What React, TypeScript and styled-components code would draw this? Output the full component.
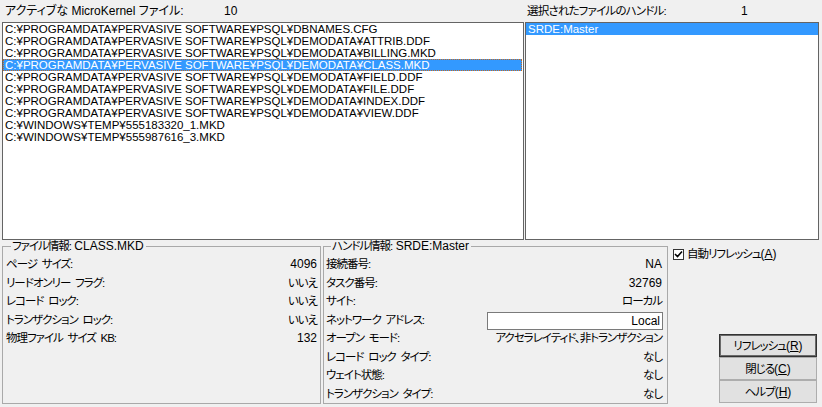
import React from "react";
import styled, { createGlobalStyle } from "styled-components";

const GlobalStyle = createGlobalStyle`
  html, body { margin: 0; padding: 0; background: #f0f0f0; }
  * { box-sizing: border-box; }
`;

const FONT = `"Liberation Sans Narrow", "Liberation Sans", "Noto Sans CJK JP", sans-serif`;

const Window = styled.div`
  width: 822px;
  height: 407px;
  background: #f0f0f0;
  color: #000;
  font-family: ${FONT};
  font-size: 12px;
  font-feature-settings: "palt";
  display: grid;
  grid-template-rows: 22px 218px 1fr;
  padding-left: 2px;
  overflow: hidden;
`;

const Jp = styled.span<{ $tight?: number }>`
  font-size: 11.5px;
  letter-spacing: ${(p) => (p.$tight ?? -1)}px;
  word-spacing: 2.5px;
`;

const Header = styled.div`
  display: grid;
  grid-template-columns: 522px 1fr;
  align-items: center;
`;

const HeaderCell = styled.div<{ $labelWidth: number }>`
  display: flex;
  align-items: center;
  padding-left: 3px;
  line-height: 12px;
  & > span:first-child {
    width: ${(p) => p.$labelWidth}px;
    white-space: nowrap;
  }
`;

const Lists = styled.div`
  display: flex;
  gap: 1px;
`;

const ListBox = styled.div<{ $width: number }>`
  width: ${(p) => p.$width}px;
  height: 218px;
  background: #fff;
  border: 1px solid #646464;
  display: flex;
  flex-direction: column;
  overflow: hidden;
`;

const ListItem = styled.div<{ $selected?: boolean; $focused?: boolean }>`
  height: 12px;
  line-height: 12px;
  font-size: 11.5px;
  padding-left: 2px;
  white-space: nowrap;
  background: ${(p) => (p.$selected ? "#3399ff" : "transparent")};
  color: ${(p) => (p.$selected ? "#fff" : "#000")};
  outline: ${(p) => (p.$focused ? "1px dotted #c86a1e" : "none")};
  outline-offset: -1px;
  margin-right: ${(p) => (p.$focused ? "1px" : "0")};
`;

const Bottom = styled.div`
  display: grid;
  grid-template-columns: 319px 345px 1fr;
  column-gap: 2px;
  padding-bottom: 3px;
`;

const Group = styled.fieldset<{ $pl: number; $pr: number }>`
  margin: 0;
  border: 1px solid #a9a9a9;
  padding: 3px ${(p) => p.$pr}px 0 ${(p) => p.$pl}px;
  min-width: 0;
  display: block;
`;

const GroupTitle = styled.legend`
  padding: 0 2px 0 1px;
  margin-left: 5px;
  line-height: 12px;
  font-size: 12px;
  white-space: nowrap;
`;

const Rows = styled.div`
  display: grid;
  grid-auto-rows: 18.5px;
`;

const Row = styled.div`
  display: flex;
  align-items: center;
  justify-content: space-between;
  white-space: nowrap;
  line-height: 12px;
`;

const Field = styled.div`
  width: 176px;
  height: 18px;
  margin-top: 3px;
  margin-right: -1px;
  background: #fff;
  border: 1px solid #7a7a7a;
  text-align: right;
  padding-right: 2px;
  line-height: 16px;
`;

const Side = styled.div`
  display: flex;
  flex-direction: column;
  padding: 8px 5px 1px 3px;
`;

const CheckRow = styled.label`
  display: flex;
  align-items: center;
  gap: 3px;
  line-height: 12px;
  white-space: nowrap;
`;

const CheckBox = styled.span`
  width: 11px;
  height: 11px;
  border: 1px solid #333;
  background: #fff;
  display: inline-flex;
  align-items: center;
  justify-content: center;
`;

const Buttons = styled.div`
  margin-top: auto;
  align-self: flex-end;
  display: flex;
  flex-direction: column;
`;

const Button = styled.button<{ $default?: boolean }>`
  width: 98px;
  height: 23px;
  margin: 0;
  padding: 0;
  font-family: ${FONT};
  font-size: 12px;
  font-feature-settings: "palt";
  color: #000;
  background: #e1e1e1;
  border: 1px solid ${(p) => (p.$default ? "#333" : "#adadad")};
  box-shadow: ${(p) => (p.$default ? "inset 0 0 0 1px #6a6a6a" : "none")};
  line-height: 12px;
`;

const U = styled.span`
  text-decoration: underline;
`;

const files = [
  "C:¥PROGRAMDATA¥PERVASIVE SOFTWARE¥PSQL¥DBNAMES.CFG",
  "C:¥PROGRAMDATA¥PERVASIVE SOFTWARE¥PSQL¥DEMODATA¥ATTRIB.DDF",
  "C:¥PROGRAMDATA¥PERVASIVE SOFTWARE¥PSQL¥DEMODATA¥BILLING.MKD",
  "C:¥PROGRAMDATA¥PERVASIVE SOFTWARE¥PSQL¥DEMODATA¥CLASS.MKD",
  "C:¥PROGRAMDATA¥PERVASIVE SOFTWARE¥PSQL¥DEMODATA¥FIELD.DDF",
  "C:¥PROGRAMDATA¥PERVASIVE SOFTWARE¥PSQL¥DEMODATA¥FILE.DDF",
  "C:¥PROGRAMDATA¥PERVASIVE SOFTWARE¥PSQL¥DEMODATA¥INDEX.DDF",
  "C:¥PROGRAMDATA¥PERVASIVE SOFTWARE¥PSQL¥DEMODATA¥VIEW.DDF",
  "C:¥WINDOWS¥TEMP¥555183320_1.MKD",
  "C:¥WINDOWS¥TEMP¥555987616_3.MKD",
];

type Val = { text: string; jp?: boolean; field?: boolean };

const fileInfo: [string, Val][] = [
  ["ページ サイズ:", { text: "4096" }],
  ["リードオンリー フラグ:", { text: "いいえ", jp: true }],
  ["レコード ロック:", { text: "いいえ", jp: true }],
  ["トランザクション ロック:", { text: "いいえ", jp: true }],
  ["物理ファイル サイズ KB:", { text: "132" }],
];

const handleInfo: [string, Val][] = [
  ["接続番号:", { text: "NA" }],
  ["タスク番号:", { text: "32769" }],
  ["サイト:", { text: "ローカル", jp: true }],
  ["ネットワーク アドレス:", { text: "Local", field: true }],
  ["オープン モード:", { text: "アクセラレイティド、非トランザクション", jp: true }],
  ["レコード ロック タイプ:", { text: "なし", jp: true }],
  ["ウェイト状態:", { text: "なし", jp: true }],
  ["トランザクション タイプ:", { text: "なし", jp: true }],
];

function Value({ v }: { v: Val }) {
  if (v.field) return <Field>{v.text}</Field>;
  if (v.jp) return <Jp>{v.text}</Jp>;
  return <span>{v.text}</span>;
}

export default function App() {
  return (
    <>
      <GlobalStyle />
      <Window>
        <Header>
          <HeaderCell $labelWidth={219}>
            <span>アクティブな MicroKernel ファイル:</span>
            <span>10</span>
          </HeaderCell>
          <HeaderCell $labelWidth={214}>
            <span>
              <Jp $tight={-0.8}>選択されたファイルのハンドル:</Jp>
            </span>
            <span>1</span>
          </HeaderCell>
        </Header>
        <Lists>
          <ListBox $width={522}>
            {files.map((f, i) => (
              <ListItem key={f} $selected={i === 3} $focused={i === 3}>
                {f}
              </ListItem>
            ))}
          </ListBox>
          <ListBox $width={294}>
            <ListItem $selected>SRDE:Master</ListItem>
          </ListBox>
        </Lists>
        <Bottom>
          <Group $pl={3} $pr={3}>
            <GroupTitle>
              <Jp>ファイル情報:</Jp> CLASS.MKD
            </GroupTitle>
            <Rows>
              {fileInfo.map(([k, v]) => (
                <Row key={k}>
                  <Jp>{k}</Jp>
                  <Value v={v} />
                </Row>
              ))}
            </Rows>
          </Group>
          <Group $pl={2} $pr={5}>
            <GroupTitle>
              <Jp>ハンドル情報:</Jp> SRDE:Master
            </GroupTitle>
            <Rows>
              {handleInfo.map(([k, v]) => (
                <Row key={k}>
                  <Jp>{k}</Jp>
                  <Value v={v} />
                </Row>
              ))}
            </Rows>
          </Group>
          <Side>
            <CheckRow>
              <CheckBox>
                <svg width="9" height="9" viewBox="0 0 9 9">
                  <path d="M1 4 L3.5 6.5 L8 1.5" fill="none" stroke="#000" strokeWidth="1.6" />
                </svg>
              </CheckBox>
              <span>
                <Jp>自動リフレッシュ</Jp>(<U>A</U>)
              </span>
            </CheckRow>
            <Buttons>
              <Button $default>
                <Jp>リフレッシュ</Jp>(<U>R</U>)
              </Button>
              <Button>
                <Jp>閉じる</Jp>(<U>C</U>)
              </Button>
              <Button>
                <Jp>ヘルプ</Jp>(<U>H</U>)
              </Button>
            </Buttons>
          </Side>
        </Bottom>
      </Window>
    </>
  );
}
